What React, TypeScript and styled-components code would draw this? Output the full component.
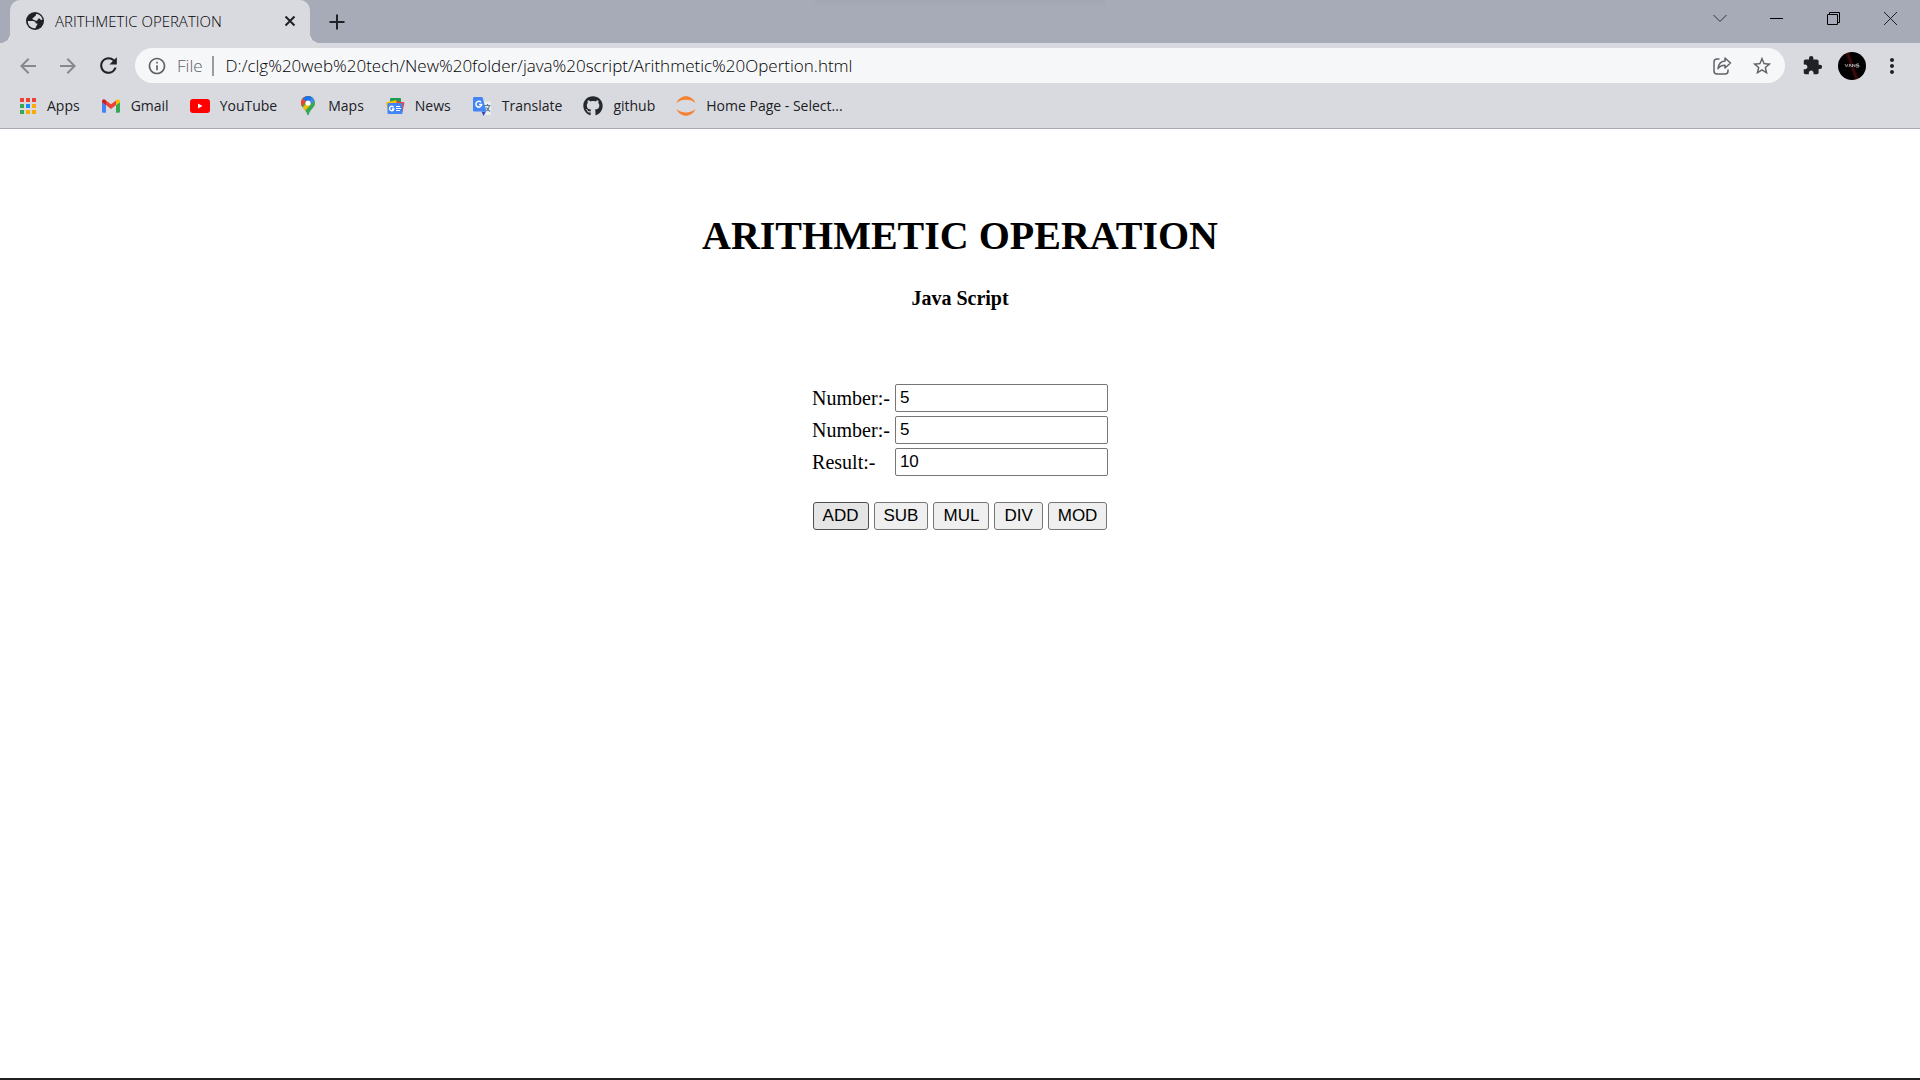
import React, { useState } from "react";
import styled, { createGlobalStyle } from "styled-components";
import { MdArrowBack, MdArrowForward, MdRefresh, MdExtension, MdStarBorder, MdMoreVert, MdInfoOutline } from "react-icons/md";
import { FaGithub } from "react-icons/fa";

const GlobalStyle = createGlobalStyle`
  *, *::before, *::after { box-sizing: border-box; }
  body { margin: 0; background: #fff; }
  svg { display: block; flex: none; }
  button, input { font: inherit; color: inherit; }
`;

const Window = styled.div`
  display: flex;
  flex-direction: column;
  min-height: 100vh;
  border-bottom: 2px solid #201f21;
  background: #fff;
`;

const Chrome = styled.header`
  background: #d9dae0;
  border-bottom: 1px solid #a9a9b1;
  color: #202124;
  font-family: "Open Sans", "Noto Sans", sans-serif;
  font-size: 14px;
`;

const TabStrip = styled.div`
  display: flex;
  justify-content: space-between;
  height: 43px;
  padding-left: 10px;
  background: linear-gradient(#a3a6b1, #a7abb7 6px) 50% 0 / 290px 100% no-repeat, #a7abb7;
`;

const TabGroup = styled.div`
  display: flex;
  align-items: center;
`;

const Tab = styled.div`
  position: relative;
  display: flex;
  align-items: center;
  gap: 9px;
  width: 300px;
  height: 43px;
  padding: 0 10px 2px 14px;
  border-radius: 10px 10px 0 0;
  background: #d9dae0;

  &::before,
  &::after {
    content: "";
    position: absolute;
    bottom: 0;
    width: 10px;
    height: 10px;
  }
  &::before {
    right: 100%;
    background: radial-gradient(circle at 0 0, transparent 10px, #d9dae0 10px);
  }
  &::after {
    left: 100%;
    background: radial-gradient(circle at 100% 0, transparent 10px, #d9dae0 10px);
  }
`;

const TabTitle = styled.span`
  flex: 1;
  color: #000;
  font-size: 15px;
  font-weight: 320;
  line-height: 20px;
  white-space: nowrap;
`;

const IconButton = styled.button<{ $width?: number; $tone?: string }>`
  display: flex;
  align-items: center;
  justify-content: center;
  flex: none;
  width: ${(p) => p.$width ?? 40}px;
  height: 34px;
  padding: 0;
  border: 0;
  background: none;
  color: ${(p) => p.$tone ?? "#202124"};
`;

const WindowControls = styled.div`
  display: flex;
  align-items: flex-start;
  padding: 1px 1px 0 0;
`;

const Toolbar = styled.div`
  display: flex;
  align-items: center;
  height: 45px;
  padding: 0 8px;
`;

const Omnibox = styled.div`
  display: flex;
  align-items: center;
  flex: 1;
  height: 35px;
  margin: 0 7px;
  padding: 0 3px 0 12px;
  border-radius: 18px;
  background: #f6f7f9;
  font-size: 17px;
  font-weight: 350;
`;

const Scheme = styled.button`
  display: flex;
  align-items: center;
  gap: 10px;
  height: 20px;
  padding: 0 9px 0 0;
  border: 0;
  border-right: 2px solid #9b9ca1;
  background: none;
  color: #5f6065;
  line-height: 20px;
`;

const AddressInput = styled.input`
  flex: 1;
  min-width: 0;
  height: 30px;
  padding: 0 12px;
  border: 0;
  outline: 0;
  background: none;
  color: #000;
`;

const Avatar = styled.span`
  display: grid;
  place-items: center;
  width: 28px;
  height: 28px;
  border-radius: 50%;
  background: linear-gradient(70deg, #000 42%, #4a0c0e 50%, #000 58%);
`;

const Bookmarks = styled.nav`
  display: flex;
  align-items: center;
  gap: 21px;
  height: 40px;
  padding: 0 17px 4px;
`;

const Bookmark = styled.a`
  display: flex;
  align-items: center;
  gap: 10px;
  color: inherit;
  line-height: 20px;
  text-decoration: none;
  white-space: nowrap;
`;

const Page = styled.main`
  display: flex;
  flex-direction: column;
  align-items: center;
  padding: 84px 10px 20px;
  color: #000;
  font-family: "Liberation Serif", "Times New Roman", serif;
  font-size: 20px;
`;

const Title = styled.h1`
  margin: 0;
  font-size: 40px;
  line-height: 46px;
`;

const Subtitle = styled.h4`
  margin: 27px 0 74px;
  font-size: 20px;
  line-height: 24px;
`;

const Fields = styled.div`
  display: grid;
  grid-template-columns: auto 213px;
  gap: 4px 5px;
`;

const FieldLabel = styled.label`
  padding-top: 2px;
  line-height: 24px;
`;

const FieldInput = styled.input`
  width: 100%;
  height: 28px;
  padding: 0 4px;
  border: 1px solid #767676;
  border-radius: 2px;
  background: #fff;
  font-family: "Liberation Sans", Arial, sans-serif;
  font-size: 17px;
`;

const Actions = styled.div`
  display: flex;
  gap: 5px;
  margin-top: 26px;
`;

const ActionButton = styled.button<{ $active: boolean }>`
  height: 28px;
  padding: 0 9px 1px;
  border: 1px solid ${(p) => (p.$active ? "#4f4f4f" : "#767676")};
  border-radius: 3px;
  background: ${(p) => (p.$active ? "#e5e5e5" : "#efefef")};
  font-family: "Liberation Sans", Arial, sans-serif;
  font-size: 17px;
  line-height: 20px;
`;

const GlobeIcon = () => (
  <svg width="22" height="22" viewBox="0 0 22 22" aria-hidden="true">
    <circle cx="11" cy="11" r="9" fill="#202124" />
    <path d="M12 4c3.500 0 6 2.500 6.500 5.500-1 .8-2 .5-2.500-.5-.5-1-2.500-.3-2.500 1 0 1.200-1.500 1-2.500.2-.8-.7-2.500 0-2.500-1.500 0-1.300 1.500-1 2-2 .4-.9 1-1 1.500-1.200z" fill="#d9dae0" />
    <path d="M3.800 11h5c2 0 3 1 3 2.500h1.700c0 2-1.500 2-1.500 3.200 0 1.500-1 1.800-2.500 1.500C6 17.500 3.800 14.500 3.800 11z" fill="#d9dae0" />
  </svg>
);

const AppsIcon = () => {
  const colors = ["#ea4335", "#ea4335", "#ea4335", "#34a853", "#1a8cff", "#fbab05", "#34a853", "#fbab05", "#fbab05"];
  return (
    <svg width="20" height="20" viewBox="0 0 20 20" aria-hidden="true">
      {colors.map((c, i) => (
        <rect key={i} x={3 + (i % 3) * 6} y={2 + Math.floor(i / 3) * 6} width="4" height="4" fill={c} />
      ))}
    </svg>
  );
};

const GmailIcon = () => (
  <svg width="20" height="20" viewBox="0 0 20 20" aria-hidden="true">
    <path d="M1 6v9.600c0 .8.5 1.200 1.200 1.200H5V9z" fill="#4285f4" />
    <path d="M19 6v9.600c0 .8-.5 1.200-1.200 1.200H15V9z" fill="#34a853" />
    <path d="M5 4.500l5 3.800 5-3.800V9l-5 4-5-4z" fill="#ea4335" />
    <path d="M1 5.500C1 3.300 3 2.600 4.500 4L5 4.500V9.300L1 6.300z" fill="#c5221f" />
    <path d="M19 5.500C19 3.300 17 2.600 15.500 4L15 4.500V9.300L19 6.300z" fill="#fbbc04" />
  </svg>
);

const YouTubeIcon = () => (
  <svg width="20" height="20" viewBox="0 0 20 20" aria-hidden="true">
    <rect y="3" width="20" height="14" rx="3" fill="#f00" />
    <path d="M8 7.500v5l4.500-2.500z" fill="#fff" />
  </svg>
);

const MapsIcon = () => (
  <svg width="20" height="20" viewBox="0 0 20 20" aria-hidden="true">
    <clipPath id="pin">
      <path d="M10 0C6 0 3 3 3 7c0 5 5 6 6 11 .2 1.500 1.800 1.500 2 0 1-5 6-6 6-11 0-4-3-7-7-7z" />
    </clipPath>
    <g clipPath="url(#pin)">
      <path d="M0 0h20v20H0z" fill="#34a853" />
      <path d="M0 0h13L3.500 11H0z" fill="#ea4335" />
      <path d="M4.500 2.500L10 7l5-6-5-2z" fill="#1a73e8" />
      <path d="M14.500 1L10 7l2 2 5-5z" fill="#4285f4" />
      <path d="M8 8L3 13l3 3 7-8z" fill="#fbbc04" />
    </g>
    <circle cx="10" cy="7" r="2.600" fill="#fff" />
  </svg>
);

const NewsIcon = () => (
  <svg width="20" height="20" viewBox="0 0 20 20" aria-hidden="true">
    <rect x="5" y="2" width="11" height="7" rx="1" fill="#1e9b50" />
    <path d="M1 6.500L11 4l2 7-10 4z" fill="#fbbc04" />
    <path d="M12 5l7.500 1.500L17.500 16l-8-2z" fill="#ea4335" />
    <rect x="2.500" y="7" width="15" height="11" rx="1" fill="#4285f4" />
    <path d="M8.600 11.300a2.200 2.200 0 1 0 .300 1.700H7" fill="none" stroke="#fff" strokeWidth="1.400" />
    <path d="M11 10.500h4M11 12.500h5M11 14.500h4" stroke="#fff" />
  </svg>
);

const TranslateIcon = () => (
  <svg width="20" height="20" viewBox="0 0 20 20" aria-hidden="true">
    <path d="M9 5.500h9.500l.5.500v12.500l-.5.500H12z" fill="#eceded" />
    <path d="M9.500 15.500H14L11.500 20z" fill="#3547b5" />
    <path d="M2 1h8.500l4 14.500H2a1 1 0 0 1-1-1V2a1 1 0 0 1 1-1z" fill="#4285f4" />
    <path d="M9 6.300a2.900 2.900 0 1 0 .700 2.200H7" fill="none" stroke="#fff" strokeWidth="1.500" />
    <path d="M13 9.500h5.500M15.500 8v1.500M17.500 9.500c-.5 3-1.500 4-3 5.500M14.500 11.500c1 2 2 2.500 3.500 4" fill="none" stroke="#607d8b" strokeWidth="1.200" />
  </svg>
);

const JupyterIcon = () => (
  <svg width="20" height="20" viewBox="0 0 20 20" aria-hidden="true">
    <path d="M.500 7C4-2 16-2 19.500 7 15 2.500 5 2.500.500 7z" fill="#f58233" />
    <path d="M.500 13c3.500 9 15.500 9 19 0-4.500 4.500-14.500 4.500-19 0z" fill="#f58233" />
  </svg>
);

const ShareIcon = () => (
  <svg width="20" height="20" viewBox="0 0 20 20" fill="none" stroke="#5f6368" strokeWidth="1.500" aria-hidden="true">
    <path d="M7.500 3H5a3 3 0 0 0-3 3v9a3 3 0 0 0 3 3h8a3 3 0 0 0 3-3v-1.500" />
    <path d="M13 2l5.500 5-5.500 5V9.200c-3.500 0-5.500 1-7 3.500.5-4.500 3-7.400 7-7.700z" strokeLinejoin="round" />
  </svg>
);

const bookmarks = [
  { label: "Apps", icon: <AppsIcon /> },
  { label: "Gmail", icon: <GmailIcon /> },
  { label: "YouTube", icon: <YouTubeIcon /> },
  { label: "Maps", icon: <MapsIcon /> },
  { label: "News", icon: <NewsIcon /> },
  { label: "Translate", icon: <TranslateIcon /> },
  { label: "github", icon: <FaGithub size={20} color="#24292e" /> },
  { label: "Home Page - Select...", icon: <JupyterIcon /> },
];

const operations: Record<string, (a: number, b: number) => number> = {
  ADD: (a, b) => a + b,
  SUB: (a, b) => a - b,
  MUL: (a, b) => a * b,
  DIV: (a, b) => a / b,
  MOD: (a, b) => a % b,
};

export default function App() {
  const [first, setFirst] = useState("5");
  const [second, setSecond] = useState("5");
  const [result, setResult] = useState("10");
  const [active, setActive] = useState("ADD");

  const run = (name: string) => {
    setActive(name);
    setResult(String(operations[name](Number(first), Number(second))));
  };

  return (
    <Window>
      <GlobalStyle />
      <Chrome>
        <TabStrip>
          <TabGroup>
            <Tab>
              <GlobeIcon />
              <TabTitle>ARITHMETIC OPERATION</TabTitle>
              <IconButton $width={20} aria-label="Close tab">
                <svg width="12" height="12" viewBox="0 0 12 12" stroke="currentColor" strokeWidth="2">
                  <path d="M1.500 1.500l9 9M10.500 1.500l-9 9" />
                </svg>
              </IconButton>
            </Tab>
            <IconButton $width={54} aria-label="New tab">
              <svg width="16" height="16" viewBox="0 0 16 16" stroke="currentColor" strokeWidth="2">
                <path d="M8 .500v15M.500 8h15" />
              </svg>
            </IconButton>
          </TabGroup>
          <WindowControls>
            <IconButton $width={57} aria-label="Search tabs">
              <svg width="14" height="14" viewBox="0 0 14 14" fill="none" stroke="#303136">
                <path d="M.500 4l6.500 6.500L13.500 4" />
              </svg>
            </IconButton>
            <IconButton $width={57} aria-label="Minimize">
              <svg width="13" height="13" viewBox="0 0 13 13" stroke="#000">
                <path d="M0 6.500h13" />
              </svg>
            </IconButton>
            <IconButton $width={57} aria-label="Restore">
              <svg width="13" height="13" viewBox="0 0 13 13" fill="none" stroke="#000">
                <path d="M.500 2.500h10v10h-10zM2.500 2.500v-2h10v10h-2" />
              </svg>
            </IconButton>
            <IconButton $width={57} aria-label="Close">
              <svg width="13" height="13" viewBox="0 0 13 13" stroke="#202124">
                <path d="M0 0l13 13M13 0L0 13" />
              </svg>
            </IconButton>
          </WindowControls>
        </TabStrip>
        <Toolbar>
          <IconButton $tone="#87888d" aria-label="Back"><MdArrowBack size={24} /></IconButton>
          <IconButton $tone="#87888d" aria-label="Forward"><MdArrowForward size={24} /></IconButton>
          <IconButton aria-label="Reload"><MdRefresh size={25} /></IconButton>
          <Omnibox>
            <Scheme>
              <MdInfoOutline size={20} />
              File
            </Scheme>
            <AddressInput
              aria-label="Address"
              defaultValue="D:/clg%20web%20tech/New%20folder/java%20script/Arithmetic%20Opertion.html"
            />
            <IconButton aria-label="Share"><ShareIcon /></IconButton>
            <IconButton $tone="#5f6368" aria-label="Bookmark"><MdStarBorder size={22} /></IconButton>
          </Omnibox>
          <IconButton aria-label="Extensions"><MdExtension size={21} /></IconButton>
          <IconButton aria-label="Profile">
            <Avatar>
              <svg width="16" height="6" viewBox="0 0 16 6" fill="none" stroke="#999" strokeWidth="1">
                <path d="M1 1l1.500 3L4 1M5 4l1-3 1.500 3M8.500 4V1L11 4V1M15 1h-2.500v1.500H15V4h-3" />
              </svg>
            </Avatar>
          </IconButton>
          <IconButton aria-label="Menu"><MdMoreVert size={24} /></IconButton>
        </Toolbar>
        <Bookmarks aria-label="Bookmarks">
          {bookmarks.map((b) => (
            <Bookmark key={b.label} href="#">
              {b.icon}
              {b.label}
            </Bookmark>
          ))}
        </Bookmarks>
      </Chrome>
      <Page>
        <Title>ARITHMETIC OPERATION</Title>
        <Subtitle>Java Script</Subtitle>
        <Fields>
          <FieldLabel htmlFor="first">Number:-</FieldLabel>
          <FieldInput id="first" value={first} onChange={(e) => setFirst(e.target.value)} />
          <FieldLabel htmlFor="second">Number:-</FieldLabel>
          <FieldInput id="second" value={second} onChange={(e) => setSecond(e.target.value)} />
          <FieldLabel htmlFor="result">Result:-</FieldLabel>
          <FieldInput id="result" value={result} readOnly />
        </Fields>
        <Actions>
          {Object.keys(operations).map((name) => (
            <ActionButton key={name} type="button" $active={name === active} onClick={() => run(name)}>
              {name}
            </ActionButton>
          ))}
        </Actions>
      </Page>
    </Window>
  );
}
